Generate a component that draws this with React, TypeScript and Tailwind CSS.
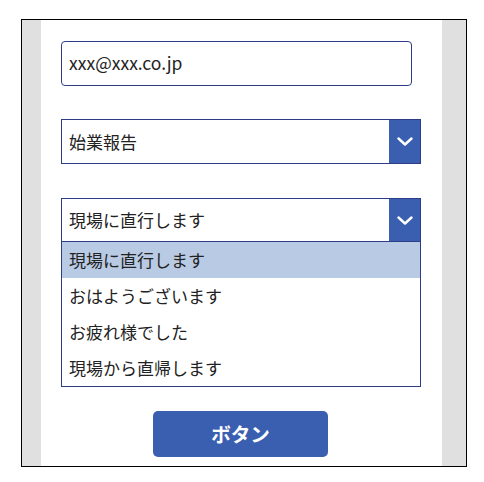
import { useState } from "react";

const font = { fontFamily: '"Noto Sans CJK JP", "Noto Sans", sans-serif' };

const Chevron = () => (
  <svg width="16" height="9" viewBox="0 0 16 9" fill="none">
    <path d="M1.5 1.5 L8 7.5 L14.5 1.5" stroke="white" strokeWidth="2.4" strokeLinecap="round" strokeLinejoin="round" />
  </svg>
);

const options = ["現場に直行します", "おはようございます", "お疲れ様でした", "現場から直帰します"];

export default function App() {
  const [selected, setSelected] = useState(0);

  return (
    <div className="w-[484px] h-[482px] bg-white pt-[19px] pl-[21px] text-[#222]" style={font}>
      <div className="w-[446px] h-[448px] border border-black flex">
        <div className="w-[19px] bg-[#e0e0e0]" />
        <div className="w-[401px] bg-white pl-[20px] pt-[21px] flex flex-col">
          <div className="w-[351px] h-[45px] border-[1.5px] border-[#2f3d86] rounded-[4px] flex items-center pl-[7px] text-[17.5px]">
            xxx@xxx.co.jp
          </div>

          <div className="mt-[33px] w-[360px] h-[45px] border border-[#2f3d86] flex">
            <div className="flex-1 flex items-center pl-[7px] text-[17px]">始業報告</div>
            <div className="w-[31px] bg-[#3a5fb0] flex items-center justify-center">
              <Chevron />
            </div>
          </div>

          <div className="mt-[34px] w-[360px]">
            <div className="h-[44px] border border-[#2f3d86] flex">
              <div className="flex-1 flex items-center pl-[7px] text-[17px]">{options[selected]}</div>
              <div className="w-[31px] bg-[#3a5fb0] flex items-center justify-center">
                <Chevron />
              </div>
            </div>
            <div className="border border-t-0 border-[#2f3d86] flex flex-col">
              {options.map((o, i) => (
                <div
                  key={o}
                  onClick={() => setSelected(i)}
                  className={`h-[36px] flex items-center pl-[7px] text-[17px] ${i === selected ? "bg-[#b9cbe4]" : "bg-white"}`}
                >
                  {o}
                </div>
              ))}
            </div>
          </div>

          <button className="mt-[24px] ml-[92px] w-[175px] h-[46px] rounded-[5px] bg-[#3a5fb0] text-white text-[19.5px] font-bold">
            ボタン
          </button>
        </div>
        <div className="flex-1 bg-[#e0e0e0]" />
      </div>
    </div>
  );
}
